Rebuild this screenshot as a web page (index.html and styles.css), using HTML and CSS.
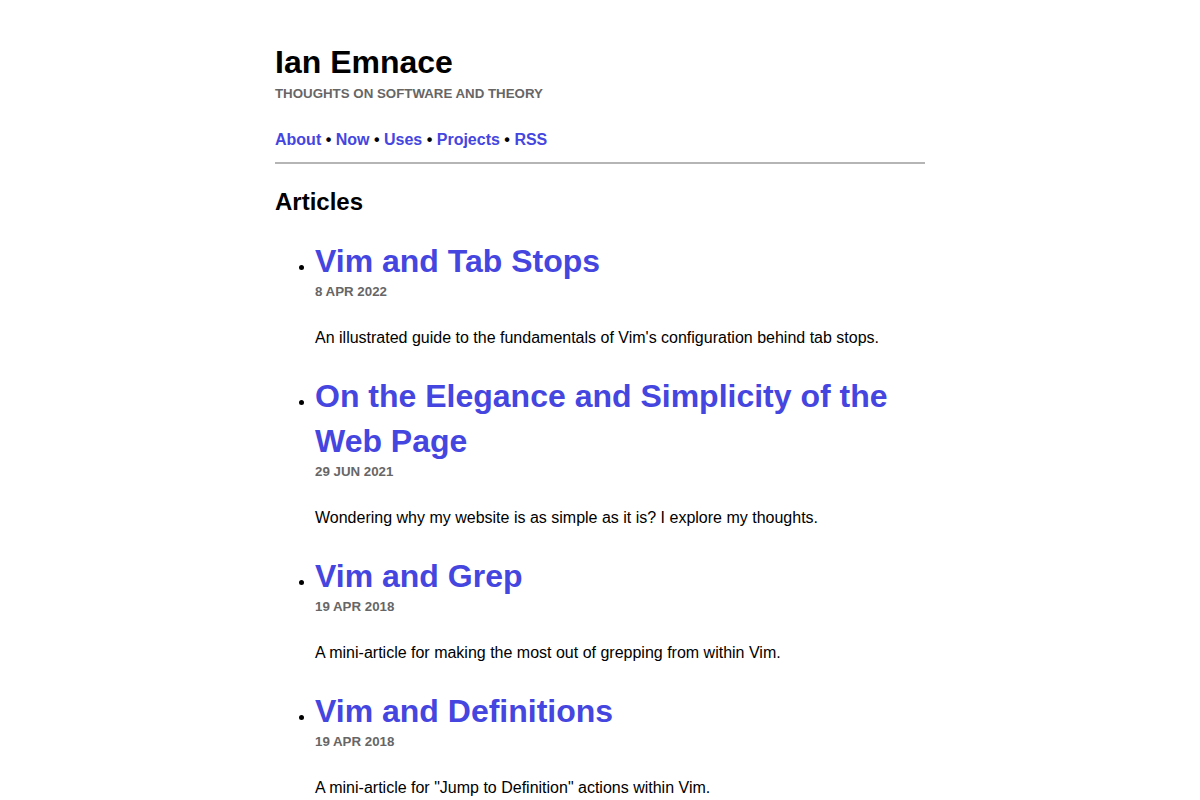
FILE: index.html
```html
<!DOCTYPE html>
<html lang="en">
<head>
<meta charset="utf-8">
<title>Ian Emnace</title>
<link rel="stylesheet" href="styles.css">
</head>
<body>
<div class="page">
  <header class="site-header">
    <h1 class="site-title">Ian Emnace</h1>
    <p class="tagline">Thoughts on software and theory</p>
    <nav class="site-nav">
      <a href="#">About</a> • <a href="#">Now</a> • <a href="#">Uses</a> • <a href="#">Projects</a> • <a href="#">RSS</a>
    </nav>
  </header>
  <main>
    <h2 class="section-title">Articles</h2>
    <ul class="articles">
      <li class="article">
        <h3 class="article-title"><a href="#">Vim and Tab Stops</a></h3>
        <time class="article-date">8 Apr 2022</time>
        <p class="article-summary">An illustrated guide to the fundamentals of Vim's configuration behind tab stops.</p>
      </li>
      <li class="article">
        <h3 class="article-title"><a href="#">On the Elegance and Simplicity of the Web Page</a></h3>
        <time class="article-date">29 Jun 2021</time>
        <p class="article-summary">Wondering why my website is as simple as it is? I explore my thoughts.</p>
      </li>
      <li class="article">
        <h3 class="article-title"><a href="#">Vim and Grep</a></h3>
        <time class="article-date">19 Apr 2018</time>
        <p class="article-summary">A mini-article for making the most out of grepping from within Vim.</p>
      </li>
      <li class="article">
        <h3 class="article-title"><a href="#">Vim and Definitions</a></h3>
        <time class="article-date">19 Apr 2018</time>
        <p class="article-summary">A mini-article for "Jump to Definition" actions within Vim.</p>
      </li>
    </ul>
  </main>
</div>
</body>
</html>
```
FILE: styles.css
```css
html, body {
  margin: 0;
  padding: 0;
  background: #fff;
}

body {
  font-family: "Liberation Sans", Arial, sans-serif;
  font-size: 16px;
  line-height: 1.15;
  color: #000;
}

a {
  color: #4545e0;
  text-decoration: none;
}

.page {
  width: 650px;
  margin: 0 auto;
  padding-top: 44px;
}

.site-header {
  border-bottom: 2px solid #b5b5b5;
  padding-bottom: 13px;
}

.site-title {
  margin: 0;
  font-size: 32px;
  line-height: 37px;
  font-weight: bold;
}

.tagline {
  margin: 5px 0 0;
  font-size: 13.3px;
  line-height: 15px;
  font-weight: bold;
  text-transform: uppercase;
  color: #666;
}

.site-nav {
  margin-top: 30px;
  font-weight: bold;
  line-height: 18px;
}

.section-title {
  margin: 24px 0 0;
  font-size: 24px;
  line-height: 28px;
}

.articles {
  margin: 23px 0 0;
  padding-left: 40px;
}

.article {
  margin-bottom: 27px;
}

.article-title {
  margin: 0;
  font-size: 32px;
  line-height: 45px;
  font-weight: bold;
}

.article-date {
  display: block;
  font-size: 13.3px;
  line-height: 16px;
  font-weight: bold;
  text-transform: uppercase;
  color: #666;
}

.article-summary {
  margin: 29px 0 0;
  line-height: 18px;
}
```
